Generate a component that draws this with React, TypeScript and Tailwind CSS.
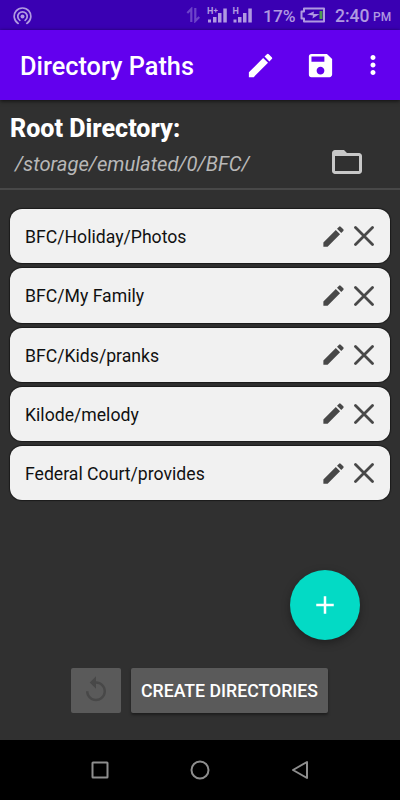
import React from 'react'
import { MdEdit, MdSave, MdMoreVert, MdFolderOpen, MdReplay, MdAdd } from 'react-icons/md'

const paths = [
  'BFC/Holiday/Photos',
  'BFC/My Family',
  'BFC/Kids/pranks',
  'Kilode/melody',
  'Federal Court/provides',
]

const StatusBar = () => {
  return (
    <div className="h-[30px] shrink-0 bg-[#3a00b3] text-[#b099e1] flex items-center pl-[13px] pr-[9px]">
      {/* Hotspot */}
      <svg className="w-[19px] h-[19px]" viewBox="0 0 19 19" fill="none" stroke="currentColor" strokeWidth="1.7" strokeLinecap="round">
        <circle cx="9.5" cy="10.5" r="2" fill="currentColor" stroke="none" />
        <path d="M6.9 14.4a4.7 4.7 0 1 1 5.2 0" />
        <path d="M5.2 17.4a8.3 8.3 0 1 1 8.6 0" />
      </svg>
      <div className="flex-1"></div>
      {/* Data arrows */}
      <svg className="w-[14px] h-4 mr-[7px]" viewBox="0 0 14 16" fill="none" stroke="#6d43c9" strokeWidth="2.2">
        <path d="M5.300 15V2L1.300 6M9.300 1v13l4-4" />
      </svg>
      {/* Signals */}
      <svg className="w-[46px] h-[18px] mr-[10px] overflow-visible" viewBox="0 0 46 18" fill="currentColor">
        <path d="M1 13.500h3v3H1zM6 11h3.500v5.500H6zM11 7h3.500v9.500H11zM16.300 2.500h3.500v14h-3.500zM26.500 13.500h3v3h-3zM31 11h3.500v5.500H31zM36 7h3.500v9.500H36zM41.300 2.500h3.500v14h-3.500z" />
        <text x="0" y="7.5" fontSize="9" fontWeight="700" fontFamily="Roboto">H</text>
        <text x="6.5" y="6.5" fontSize="8" fontWeight="700" fontFamily="Roboto">+</text>
        <text x="25.5" y="7.5" fontSize="9" fontWeight="700" fontFamily="Roboto">H</text>
      </svg>
      <span className="w-[37px] text-[17.4px] leading-[30px] font-medium whitespace-nowrap pt-px">17%</span>
      {/* Battery */}
      <svg className="w-[26px] h-4 mr-[9px]" viewBox="0 0 26 16" fill="none" stroke="currentColor" strokeWidth="2">
        <path d="M4 1.500h20v13H4v-3H1.500v-7H4z" strokeLinejoin="round" />
        <path d="M19.500 4h3v8h-3z" fill="#4d9b52" stroke="none" />
        <path d="M7 7.500l7-3-.5 2.500h6l-7 4.500.5-3z" fill="currentColor" stroke="none" />
      </svg>
      <span className="w-[36px] text-[17.5px] leading-[30px] font-medium pt-px">2:40</span>
      <span className="w-[18px] text-[12px] font-medium pt-[4px] ml-[2px]">PM</span>
    </div>
  )
}

const PathRow = ({ path }: { path: string }) => {
  return (
    <div className="h-[54.2px] bg-[#f1f1f1] rounded-[12px] flex items-center pl-[15px] pr-[16.500px] text-[#484848] shadow-[0_0_1px_1px_rgba(0,0,0,0.45)]">
      <span className="flex-1 pt-[2px] text-[17.65px] text-[#111111]">{path}</span>
      <MdEdit className="w-[27px] h-[27px] mr-[6.500px]" />
      <svg className="w-5 h-5" viewBox="0 0 20 20" fill="none" stroke="currentColor" strokeWidth="2.8" strokeLinecap="round">
        <path d="M1.500 1.500l17 17M18.500 1.500l-17 17" />
      </svg>
    </div>
  )
}

const App = () => {
  return (
    <div className="w-[400px] h-[800px] bg-[#303030] flex flex-col overflow-hidden relative font-[Roboto,sans-serif]">
      <StatusBar />

      {/* Toolbar */}
      <div className="h-[70px] shrink-0 bg-[#6200ee] text-white flex items-center pl-5 pr-[12.500px] shadow-[0_1px_4px_rgba(0,0,0,0.7)]">
        <h1 className="flex-1 pt-[3px] text-[25.3px] font-medium whitespace-nowrap">Directory Paths</h1>
        <MdEdit className="w-[31px] h-[31px] mr-[29px]" />
        <MdSave className="w-[31px] h-[31px] mr-[22px]" />
        <MdMoreVert className="w-[30px] h-[30px]" />
      </div>

      {/* Root directory */}
      <div className="h-[90px] shrink-0 border-b-2 border-[#484848] pl-[10px] pr-[35px] pt-[12px]">
        <h2 className="h-8 text-[25.1px] leading-[33px] font-extrabold text-white">Root Directory:</h2>
        <div className="flex items-center h-9">
          <span className="flex-1 pl-[5px] pt-[4px] text-[20.2px] italic text-[#b8b8b8]">/storage/emulated/0/BFC/</span>
          <MdFolderOpen className="w-9 h-9 text-[#c8c8c8]" />
        </div>
      </div>

      {/* Directory list */}
      <div className="flex-1 flex flex-col gap-[5px] px-[10px] pt-[19.300px]">
        {paths.map((path) => (
          <PathRow key={path} path={path} />
        ))}
      </div>

      {/* Add button */}
      <button className="absolute left-[290px] top-[570px] w-[70px] h-[70px] rounded-full bg-[#03dac5] text-white flex items-center justify-center shadow-[0_3px_8px_rgba(0,0,0,0.35)]">
        <MdAdd className="w-[30px] h-[30px]" />
      </button>

      <div className="flex shrink-0 gap-[10px] h-[45px] mb-[27.500px] pl-[71px]">
        <button className="w-[50px] bg-[#5a5a5a] rounded-[2px] text-[#484848] flex items-center justify-center">
          <MdReplay className="w-[30px] h-[30px]" />
        </button>
        <button className="w-[197px] bg-[#5a5a5a] rounded-[2px] text-white text-[17.7px] font-medium whitespace-nowrap pt-[2px] shadow-[0_2px_3px_rgba(0,0,0,0.4)]">
          CREATE DIRECTORIES
        </button>
      </div>

      {/* Navigation bar */}
      <div className="h-[60px] shrink-0 bg-black flex items-center justify-center gap-20">
        <svg className="w-5 h-5" viewBox="0 0 20 20" fill="none" stroke="#8e8e8e" strokeWidth="2">
          <rect x="2.500" y="2.500" width="15" height="15" rx="0.5" />
        </svg>
        <svg className="w-5 h-5" viewBox="0 0 20 20" fill="none" stroke="#8e8e8e" strokeWidth="2">
          <circle cx="10" cy="10" r="8.500" />
        </svg>
        <svg className="w-5 h-5" viewBox="0 0 20 20" fill="none" stroke="#8e8e8e" strokeWidth="2" strokeLinejoin="round">
          <path d="M17 2v16L3 10z" />
        </svg>
      </div>
    </div>
  )
}

export default App
